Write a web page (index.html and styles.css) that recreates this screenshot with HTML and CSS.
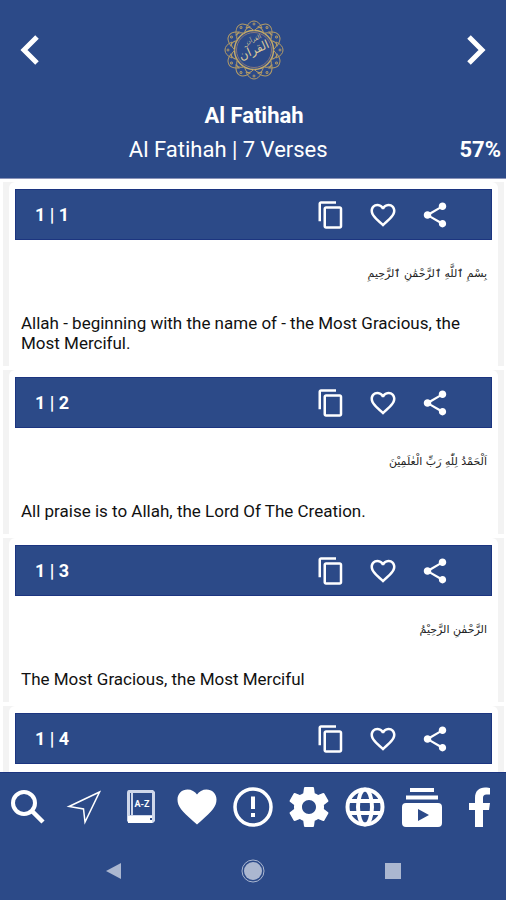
FILE: index.html
```html
<!DOCTYPE html>
<html lang="en">

<head>
	<meta charset="utf-8">
	<meta name="viewport" content="width=device-width, initial-scale=1.0">
	<title>Al Fatihah</title>
	<link rel="stylesheet" href="styles.css">
</head>

<body>

	<!-- Icons used more than once -->
	<svg class="sprite" aria-hidden="true">
		<symbol id="copy" viewBox="0 0 24 24">
			<path d="M16 1H4c-1.100 0-2 .9-2 2v14h2V3h12V1zm3 4H8c-1.100 0-2 .9-2 2v14c0 1.100.9 2 2 2h11c1.100 0 2-.9 2-2V7c0-1.100-.9-2-2-2zm0 16H8V7h11v14z" />
		</symbol>
		<symbol id="heart-line" viewBox="0 0 24 24">
			<path d="M16.500 3c-1.740 0-3.410.81-4.500 2.090C10.910 3.810 9.240 3 7.500 3 4.420 3 2 5.420 2 8.500c0 3.780 3.400 6.860 8.550 11.540L12 21.350l1.450-1.320C18.600 15.360 22 12.280 22 8.500 22 5.420 19.580 3 16.500 3zm-4.400 15.550l-.1.100-.1-.1C7.140 14.240 4 11.390 4 8.500 4 6.500 5.500 5 7.500 5c1.540 0 3.040.99 3.570 2.360h1.870C13.460 5.990 14.960 5 16.500 5c2 0 3.500 1.500 3.500 3.500 0 2.890-3.140 5.740-7.900 10.050z" />
		</symbol>
		<symbol id="share" viewBox="0 0 24 24">
			<path d="M18 16.080c-.76 0-1.440.3-1.960.77L8.910 12.700c.05-.23.09-.46.09-.7s-.04-.47-.09-.7l7.050-4.110c.54.5 1.250.81 2.040.81 1.660 0 3-1.340 3-3s-1.340-3-3-3-3 1.340-3 3c0 .24.04.47.09.7L8.040 9.810C7.500 9.310 6.790 9 6 9c-1.660 0-3 1.340-3 3s1.340 3 3 3c.79 0 1.500-.31 2.040-.81l7.120 4.160c-.05.21-.08.43-.08.65 0 1.610 1.310 2.920 2.920 2.920s2.920-1.310 2.920-2.920-1.310-2.920-2.920-2.920z" />
		</symbol>
	</svg>

	<header class="top">
		<div class="top-row">
			<button class="arrow" aria-label="Previous surah">
				<svg viewBox="0 0 32 40"><path d="M22 7 9 20l13 13" /></svg>
			</button>
			<svg class="logo" viewBox="0 0 60 60" role="img" aria-label="Quran">
				<defs>
					<g id="petals">
						<path d="M22 8q3-7 8-7t8 7q-4-2-8 3-4-5-8-3z" />
						<path d="M22 8q3-7 8-7t8 7q-4-2-8 3-4-5-8-3z" transform="rotate(90 30 30)" />
						<path d="M22 8q3-7 8-7t8 7q-4-2-8 3-4-5-8-3z" transform="rotate(180 30 30)" />
						<path d="M22 8q3-7 8-7t8 7q-4-2-8 3-4-5-8-3z" transform="rotate(270 30 30)" />
						<circle cx="30" cy="4" r="1" />
						<circle cx="56" cy="30" r="1" />
						<circle cx="30" cy="56" r="1" />
						<circle cx="4" cy="30" r="1" />
					</g>
				</defs>
				<circle class="ring thin" cx="30" cy="30" r="17.500" />
				<circle class="ring" cx="30" cy="30" r="19.500" />
				<g class="ring lace">
					<use href="#petals" />
					<use href="#petals" transform="rotate(30 30 30)" />
					<use href="#petals" transform="rotate(60 30 30)" />
				</g>
				<g transform="rotate(-24 30 30)">
					<text x="34" y="22">القرآن</text>
					<text class="big" x="30" y="34">القرآن</text>
				</g>
			</svg>
			<button class="arrow" aria-label="Next surah">
				<svg viewBox="0 0 32 40"><path d="m8 7 13 13L8 33" /></svg>
			</button>
		</div>
		<h1>Al Fatihah</h1>
		<div class="info">
			<p class="surah">Al Fatihah | 7 Verses</p>
			<p class="percent">57%</p>
		</div>
	</header>

	<main class="verses">
		<article class="verse">
			<div class="inner">
				<div class="bar">
					<h2>1 | 1</h2>
					<button aria-label="Copy"><svg><use href="#copy" /></svg></button>
					<button aria-label="Favourite"><svg><use href="#heart-line" /></svg></button>
					<button aria-label="Share"><svg><use href="#share" /></svg></button>
				</div>
				<p class="arabic" lang="ar" dir="rtl">بِسْمِ ٱللَّهِ ٱلرَّحْمَٰنِ ٱلرَّحِيمِ</p>
				<p class="english">Allah - beginning with the name of - the Most Gracious, the Most Merciful.</p>
			</div>
		</article>

		<article class="verse">
			<div class="inner">
				<div class="bar">
					<h2>1 | 2</h2>
					<button aria-label="Copy"><svg><use href="#copy" /></svg></button>
					<button aria-label="Favourite"><svg><use href="#heart-line" /></svg></button>
					<button aria-label="Share"><svg><use href="#share" /></svg></button>
				</div>
				<p class="arabic" lang="ar" dir="rtl">اَلْحَمْدُ لِلّٰهِ رَبِّ الْعٰلَمِيْنَ</p>
				<p class="english">All praise is to Allah, the Lord Of The Creation.</p>
			</div>
		</article>

		<article class="verse">
			<div class="inner">
				<div class="bar">
					<h2>1 | 3</h2>
					<button aria-label="Copy"><svg><use href="#copy" /></svg></button>
					<button aria-label="Favourite"><svg><use href="#heart-line" /></svg></button>
					<button aria-label="Share"><svg><use href="#share" /></svg></button>
				</div>
				<p class="arabic" lang="ar" dir="rtl">الرَّحْمٰنِ الرَّحِيْمُ</p>
				<p class="english">The Most Gracious, the Most Merciful</p>
			</div>
		</article>

		<article class="verse">
			<div class="inner">
				<div class="bar">
					<h2>1 | 4</h2>
					<button aria-label="Copy"><svg><use href="#copy" /></svg></button>
					<button aria-label="Favourite"><svg><use href="#heart-line" /></svg></button>
					<button aria-label="Share"><svg><use href="#share" /></svg></button>
				</div>
			</div>
		</article>
	</main>

	<footer class="bottom">
		<nav class="menu">
			<a href="#" aria-label="Search">
				<svg viewBox="0 0 40 40"><circle class="line" cx="16" cy="16" r="11" stroke-width="4" /><path class="line" d="m24 24 11 11" stroke-width="4.500" /></svg>
			</a>
			<a href="#" aria-label="Go to">
				<svg viewBox="0 0 40 40"><path class="line" d="M35.500 5 5 19.500l14.500 2.500L21 35z" stroke-width="1.500" /></svg>
			</a>
			<a href="#" aria-label="Dictionary">
				<svg viewBox="0 0 40 40">
					<path class="soft" d="M8 3h24l2 2v29l-2 2H8l-2-2V6q0-3 2-3z" />
					<path class="hole" d="M12 6h19v22H12zM9 6h1v22H9z" />
					<path class="fill" d="M7 29h24v7H7z" />
					<path class="hole" d="M29 31h2v2h-2z" />
					<text x="21" y="20">A-Z</text>
				</svg>
			</a>
			<a href="#" aria-label="Favourites">
				<svg viewBox="0 0 40 40"><path class="fill" d="M20 37.500 16 34C5 24 .5 19.500.5 12.500.5 6.500 5 2.500 10.500 2.500c4 0 7.500 2 9.500 5 2-3 5.500-5 9.500-5 5.500 0 10 4 10 10C39.500 19.500 35 24 24 34z" /></svg>
			</a>
			<a href="#" aria-label="About">
				<svg viewBox="0 0 40 40"><circle class="line" cx="20" cy="20" r="18" stroke-width="3.500" /><path class="fill" d="M18 9.500h4V22h-4zM18 26h4v4h-4z" /></svg>
			</a>
			<a href="#" aria-label="Settings">
				<svg viewBox="2 2 20 20"><path class="fill" d="M19.430 12.980c.04-.32.07-.64.07-.98s-.03-.66-.07-.98l2.110-1.650c.19-.15.24-.42.12-.64l-2-3.460c-.12-.22-.39-.3-.61-.22l-2.490 1c-.52-.4-1.080-.73-1.690-.98l-.38-2.650C14.460 2.180 14.250 2 14 2h-4c-.25 0-.46.18-.49.42l-.38 2.650c-.61.25-1.170.59-1.690.98l-2.490-1c-.23-.09-.49 0-.61.22l-2 3.460c-.13.22-.07.49.12.64l2.110 1.650c-.04.32-.07.65-.07.98s.03.66.07.98l-2.110 1.650c-.19.15-.24.42-.12.64l2 3.460c.12.22.39.3.61.22l2.490-1c.52.4 1.080.73 1.690.98l.38 2.650c.03.24.24.42.49.42h4c.25 0 .46-.18.49-.42l.38-2.650c.61-.25 1.170-.59 1.690-.98l2.490 1c.23.09.49 0 .61-.22l2-3.460c.12-.22.07-.49-.12-.64l-2.110-1.650zM12 15.500c-1.930 0-3.500-1.570-3.500-3.500s1.570-3.500 3.500-3.500 3.500 1.570 3.500 3.500-1.570 3.500-3.500 3.500z" /></svg>
			</a>
			<a href="#" aria-label="Language">
				<svg viewBox="0 0 40 40"><g class="line" stroke-width="4"><circle cx="20" cy="20" r="17.500" /><ellipse cx="20" cy="20" rx="7" ry="17.500" /><path d="M4 14h32M4 26h32" /></g></svg>
			</a>
			<a href="#" aria-label="Videos">
				<svg viewBox="0 0 40 40"><path class="fill" d="M8 1h24v4H8zM4 8.500h32v4H4z" /><path class="fill" fill-rule="evenodd" d="M4 16h32q4 0 4 4v16q0 4-4 4H4q-4 0-4-4V20q0-4 4-4zm12 6v12l11-6z" /></svg>
			</a>
			<a href="#" aria-label="Facebook">
				<svg viewBox="0 0 40 40"><path class="fill" d="M17 40V23h-6v-7h6v-5C17 4 21 .5 27 .5c2.500 0 5 .5 5 .5v6.500h-3.500c-2.500 0-3.500 1.500-3.500 3.500v5h7l-1 7h-6v17z" /></svg>
			</a>
		</nav>
		<div class="system">
			<button aria-label="Back"><svg viewBox="0 0 24 24"><path d="M20 4v16L5 12z" /></svg></button>
			<button aria-label="Home"><svg viewBox="0 0 24 24"><circle cx="12" cy="12" r="9" /><circle class="rim" cx="12" cy="12" r="11" /></svg></button>
			<button aria-label="Recent apps"><svg viewBox="0 0 24 24"><path d="M4 4h16v16H4z" /></svg></button>
		</div>
	</footer>

</body>

</html>
```
FILE: styles.css
```css
* {
	box-sizing: border-box;
}

body {
	display: flex;
	flex-direction: column;
	height: 100vh;
	margin: 0;
	background-color: white;
	font-family: Roboto, sans-serif;
	color: #111;
}

h1,
h2,
p {
	margin: 0;
}

button {
	display: flex;
	padding: 0;
	border: none;
	background: none;
	cursor: pointer;
}

.sprite {
	display: none;
}

/* top */

.top {
	flex: none;
	padding: 20px 5px 12px 7px;
	border-bottom: 1px solid #8a93b8;
	background-color: #2c4a88;
	color: white;
}

.top-row {
	display: flex;
	justify-content: space-between;
	align-items: center;
	padding: 0 8px;
}

.arrow svg {
	width: 32px;
	height: 40px;
	fill: none;
	stroke: white;
	stroke-width: 5;
}

.logo {
	width: 60px;
	height: 60px;
	font-family: "DejaVu Sans", sans-serif;
	font-size: 6px;
	text-anchor: middle;
	fill: #d8c79a;
}

.logo .big {
	font-size: 12px;
}

.ring {
	fill: none;
	stroke: #c2aa6c;
	stroke-width: 1.5;
}

.thin {
	stroke: #85757e;
	stroke-width: 1;
}

.lace {
	stroke: #b39b66;
	stroke-width: 1;
}

h1 {
	margin-top: 20px;
	font-size: 22px;
	line-height: 32px;
	text-align: center;
}

.info {
	display: flex;
	gap: 10px;
	margin-top: 2px;
	font-size: 22px;
	line-height: 32px;
}

.surah {
	flex: 1;
	text-align: center;
}

.percent {
	font-weight: bold;
}

/* verses */

.verses {
	flex: 1;
	display: flex;
	flex-direction: column;
	gap: 4px;
	overflow: hidden;
	padding: 3px 2px 0 3px;
}

.verse {
	flex: none;
	padding: 0 6px;
	background-color: #f3f3f3;
}

.inner {
	padding: 7px 6px 13px;
	border-radius: 6px 6px 0 0;
	background-color: white;
}

.bar {
	display: flex;
	align-items: center;
	gap: 22px;
	height: 51px;
	padding: 0 41px 0 19px;
	border: 1px solid #1c3580;
	background-color: #2c4a88;
	color: white;
}

.bar h2 {
	flex: 1;
	font-size: 18px;
	line-height: 24px;
}

.bar svg {
	width: 30px;
	height: 30px;
	fill: white;
}

.arabic {
	padding: 22px 5px 0;
	font-family: "DejaVu Sans", sans-serif;
	font-size: 11px;
	line-height: 24px;
	color: #222;
}

.english {
	padding: 27px 6px 0;
	font-size: 17px;
	line-height: 20px;
}

/* bottom */

.bottom {
	flex: none;
	border-top: 1px solid #1c3580;
	background-color: #2c4a88;
}

.menu {
	display: grid;
	grid-template-columns: repeat(9, 1fr);
	justify-items: center;
	padding: 14px 0;
}

.menu a {
	display: flex;
}

.menu svg {
	width: 40px;
	height: 40px;
	font-size: 9px;
	font-weight: bold;
	text-anchor: middle;
	fill: white;
}

.menu .line {
	fill: none;
	stroke: white;
}

.menu .soft {
	fill: #cfd7ea;
}

.menu .hole {
	fill: #2c4a88;
}

.system {
	display: flex;
	justify-content: center;
	gap: 116px;
	padding: 18px 0 17px;
}

.system svg {
	width: 24px;
	height: 24px;
	fill: #abb7d0;
}

.system .rim {
	fill: none;
	stroke: #abb7d0;
}
```
